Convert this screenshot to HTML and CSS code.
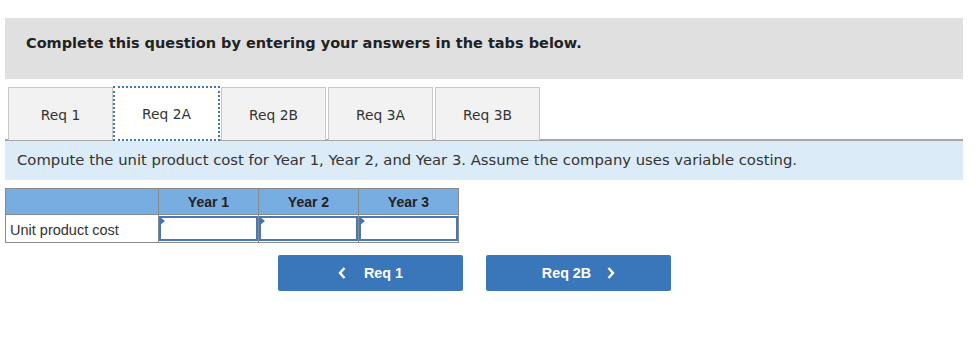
FILE: index.html
```html
<!DOCTYPE html>
<html>
<head>
<meta charset="utf-8">
<link rel="stylesheet" href="styles.css">
</head>
<body>
<div class="page">
  <div class="banner">Complete this question by entering your answers in the tabs below.</div>
  <div class="tabs">
    <div class="tab">Req 1</div>
    <div class="tab active">Req 2A</div>
    <div class="tab">Req 2B</div>
    <div class="tab">Req 3A</div>
    <div class="tab">Req 3B</div>
  </div>
  <div class="prompt">Compute the unit product cost for Year 1, Year 2, and Year 3. Assume the company uses variable costing.</div>
  <table class="grid">
    <tr class="head">
      <th class="lbl"></th>
      <th>Year 1</th>
      <th>Year 2</th>
      <th>Year 3</th>
    </tr>
    <tr>
      <td class="lbl">Unit product cost</td>
      <td class="in"><div class="box"></div></td>
      <td class="in"><div class="box"></div></td>
      <td class="in"><div class="box"></div></td>
    </tr>
  </table>
  <div class="nav">
    <button class="btn"><svg class="chev left" width="8" height="12" viewBox="0 0 8 12"><polyline points="6.5,1 2,6 6.5,11" fill="none" stroke="#fff" stroke-width="2.4"/></svg>Req 1</button>
    <button class="btn">Req 2B<svg class="chev right" width="8" height="12" viewBox="0 0 8 12"><polyline points="1.5,1 6,6 1.5,11" fill="none" stroke="#fff" stroke-width="2.4"/></svg></button>
  </div>
</div>
</body>
</html>
```
FILE: styles.css
```css
html, body {
  margin: 0;
  padding: 0;
  background: #fff;
}
.page {
  padding: 18px 0 0 5px;
  width: 958px;
  font-family: "DejaVu Sans", Verdana, sans-serif;
  color: #333;
}
.banner {
  background: #e0e0e0;
  height: 61px;
  box-sizing: border-box;
  padding: 17px 0 0 21px;
  font-weight: bold;
  font-size: 14.5px;
  color: #222;
}
.tabs {
  display: flex;
  margin-top: 8px;
  padding-left: 3px;
  gap: 2px;
  height: 53px;
}
.tab {
  background: #f2f2f2;
  border: 1px solid #c8c8c8;
  border-bottom: none;
  display: flex;
  align-items: center;
  justify-content: center;
  font-size: 13.8px;
  color: #333;
  padding-top: 1px;
  box-sizing: border-box;
  width: 105px;
}
.tab.active {
  background: #fff;
  border: 2px dotted #3d75b8;
  height: 55px;
  margin-top: -1px;
  width: 107px;
  margin-left: -2px;
  margin-right: -1px;
  position: relative;
  z-index: 1;
}
.prompt {
  background: #dbebf8;
  border-top: 2px solid #a6a6a6;
  height: 41px;
  box-sizing: border-box;
  margin-top: -1px;
  padding: 10px 0 0 12px;
  font-size: 14.8px;
  color: #333;
}
.grid {
  margin-top: 8px;
  border-collapse: collapse;
  font-family: "Liberation Sans", Arial, sans-serif;
  font-size: 14px;
}
.grid th, .grid td {
  border: 1px solid #8a8a8a;
  padding: 0;
}
.grid th {
  background: #78ade2;
  height: 25px;
  font-weight: bold;
  color: #222;
  width: 99px;
}
.grid th.lbl {
  width: 152px;
}
.grid td {
  height: 25px;
  background: #fff;
}
.grid td.lbl {
  padding-left: 4px;
  color: #333;
  font-size: 14.5px;
  padding-top: 2px;
}
.grid td.in {
  padding: 0;
}
.box {
  position: relative;
  height: 25px;
  border: 2px solid #4679b8;
  box-sizing: border-box;
  margin: 0;
}
.box::before {
  content: "";
  position: absolute;
  left: -1px;
  top: -1px;
  border-top: 4px solid transparent;
  border-bottom: 4px solid transparent;
  border-left: 5px solid #3d75b8;
}
.nav {
  display: flex;
  gap: 23px;
  margin-top: 12px;
  padding-left: 273px;
}
.btn {
  width: 185px;
  height: 36px;
  background: #3a76ba;
  border: none;
  border-radius: 2px;
  color: #fff;
  font-family: "Liberation Sans", Arial, sans-serif;
  font-weight: bold;
  font-size: 14.3px;
  display: flex;
  align-items: center;
  justify-content: center;
  padding: 0;
}
.chev.left {
  margin-right: 18px;
}
.chev.right {
  margin-left: 16px;
}
```
